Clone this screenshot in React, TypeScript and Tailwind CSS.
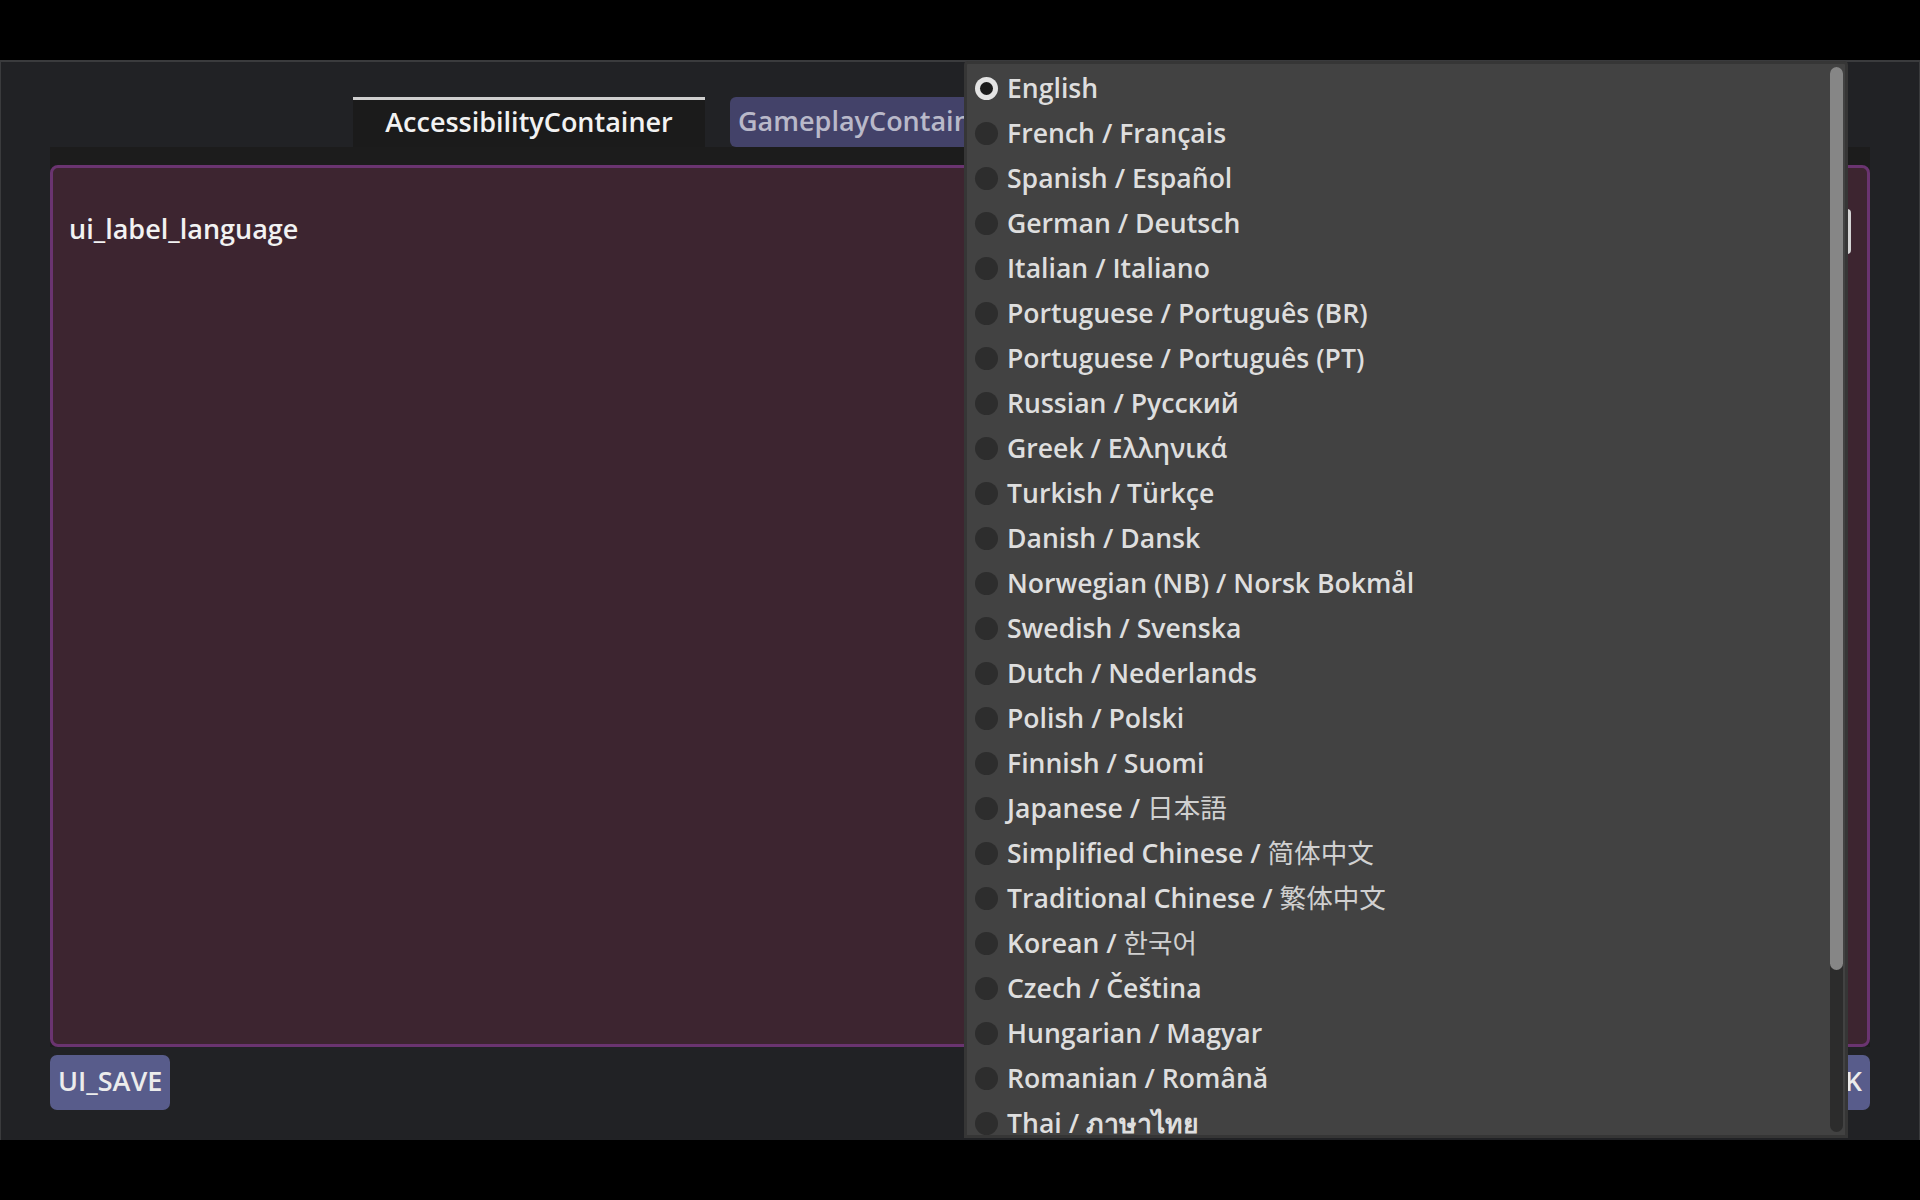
import React from 'react';

type Lang = { name: string; native?: string; cjk?: boolean };

const LANGS: Lang[] = [
  { name: 'English' },
  { name: 'French', native: 'Français' },
  { name: 'Spanish', native: 'Español' },
  { name: 'German', native: 'Deutsch' },
  { name: 'Italian', native: 'Italiano' },
  { name: 'Portuguese', native: 'Português (BR)' },
  { name: 'Portuguese', native: 'Português (PT)' },
  { name: 'Russian', native: 'Русский' },
  { name: 'Greek', native: 'Ελληνικά' },
  { name: 'Turkish', native: 'Türkçe' },
  { name: 'Danish', native: 'Dansk' },
  { name: 'Norwegian (NB)', native: 'Norsk Bokmål' },
  { name: 'Swedish', native: 'Svenska' },
  { name: 'Dutch', native: 'Nederlands' },
  { name: 'Polish', native: 'Polski' },
  { name: 'Finnish', native: 'Suomi' },
  { name: 'Japanese', native: '日本語', cjk: true },
  { name: 'Simplified Chinese', native: '简体中文', cjk: true },
  { name: 'Traditional Chinese', native: '繁体中文', cjk: true },
  { name: 'Korean', native: '한국어', cjk: true },
  { name: 'Czech', native: 'Čeština' },
  { name: 'Hungarian', native: 'Magyar' },
  { name: 'Romanian', native: 'Română' },
  { name: 'Thai', native: 'ภาษาไทย' },
];

function Radio({ checked }: { checked: boolean }) {
  if (checked) {
    return (
      <div className="flex h-[23px] w-[23px] shrink-0 items-center justify-center rounded-full bg-[#e4e4e4]">
        <div className="h-[13px] w-[13px] rounded-full bg-[#1c1c1c]" />
      </div>
    );
  }
  return <div className="h-[23px] w-[23px] shrink-0 rounded-full bg-[#2d2d2d]" />;
}

function LanguagePopup() {
  return (
    <div className="absolute left-[964px] top-[61px] h-[1077px] w-[884px] overflow-hidden rounded-t-[4px] border-[3px] border-[#363636] bg-[#424242]">
      <div className="flex flex-col pt-[2px] pl-[8px]">
        {LANGS.map((l, i) => (
          <div key={l.name + i} className="flex h-[45px] shrink-0 items-center gap-[9px]">
            <Radio checked={i === 0} />
            <span className="-mt-[1px] whitespace-nowrap text-[26.6px] leading-none text-[#dedede]">
              {l.name}
              {l.native && (
                <>
                  {' / '}
                  <span className={l.cjk ? 'font-normal text-[#d0d0d0]' : ''}>{l.native}</span>
                </>
              )}
            </span>
          </div>
        ))}
      </div>

      {/* полоса прокрутки */}
      <div className="absolute right-[2px] top-[3px] bottom-[3px] w-[13px] rounded-full bg-[#2c2c2c]">
        <div className="h-[903px] w-full rounded-full bg-[#868686]" />
      </div>
    </div>
  );
}

export default function App() {
  return (
    <div className="relative h-screen w-full overflow-hidden bg-black font-['Open_Sans','Noto_Sans','Noto_Sans_CJK_JP',sans-serif] font-semibold">
      <div className="h-[60px]" />

      {/* окно настроек */}
      <div className="flex h-[1080px] flex-col border-x border-t-2 border-[#3a3b3d] bg-[#212225] px-[49px]">
        {/* вкладки */}
        <div className="mt-[35px] flex h-[50px] shrink-0 gap-[25px] pl-[303px]">
          <div className="flex w-[352px] items-center justify-center border-t-[3px] border-[#cfcfcf] bg-[#1b1b1b] pb-[3px] text-[27px] text-[#f2f2f2]">
            AccessibilityContainer
          </div>
          <div className="flex w-[300px] items-center rounded-[6px] bg-[#434269] px-[8px] pb-[2px] text-[27px] text-[#b9b9c9]">
            GameplayContainer
          </div>
        </div>

        {/* панель вкладки */}
        <div className="h-[900px] shrink-0 bg-[#1c1c1c] pt-[18px]">
          <div className="h-full rounded-[8px] border-[3px] border-[#6a3470] bg-[#3d2530] px-[16px] pt-[41px]">
            <div className="flex h-[45px] items-center justify-between">
              <span className="-mt-[4px] text-[27px] text-[#f2f2f2]">ui_label_language</span>
              <div className="h-full w-[420px] rounded-[4px] border-r-[3px] border-[#d4d4d4] bg-[#55598a]" />
            </div>
          </div>
        </div>

        {/* кнопки */}
        <div className="mt-[8px] flex h-[55px] shrink-0 justify-between">
          <button className="rounded-[7px] bg-[#585c8b] px-[8px] pb-[2px] text-[27px] text-[#ececec]">UI_SAVE</button>
          <button className="rounded-[7px] bg-[#585c8b] px-[8px] pb-[2px] text-[27px] text-[#ececec]">UI_BACK</button>
        </div>
      </div>

      <LanguagePopup />
    </div>
  );
}
